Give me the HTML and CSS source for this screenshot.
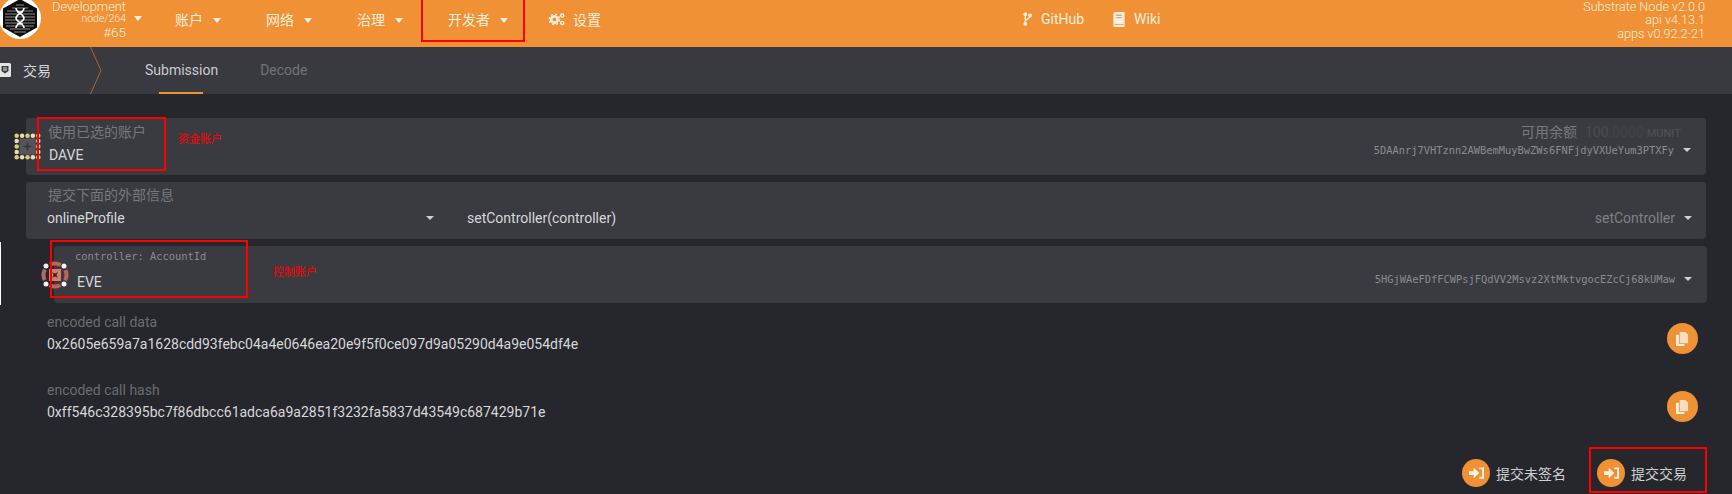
FILE: index.html
```html
<!DOCTYPE html>
<html lang="zh">
<head>
<meta charset="utf-8">
<title>交易</title>
<link rel="stylesheet" href="styles.css">
</head>
<body>
<header class="topbar">
  <svg class="logo" viewBox="0 0 42 42" width="42" height="42">
    <circle cx="21" cy="21" r="21" fill="#fff"/>
    <path d="M21 2 38 11.500V30.500L21 40 4 30.500V11.500Z" fill="#0c0c0c"/>
    <path d="M8 14H34M6 17H36M6 20H36M6 23H36M6 26H36M7 29H35M11 32H31M15 35H27M13 11H29M17 8H25" stroke="#8a8a8a" stroke-width="1"/>
    <path d="M17 11C17 16 25 17 25 21S17 26 17 31M25 11C25 16 17 17 17 21S25 26 25 31M18 15H24M18 27H24" fill="none" stroke="#fff" stroke-width="1.600"/>
  </svg>
  <div class="chain">
    <div class="chain-name">Development</div>
    <div class="chain-node">node/264</div>
    <div class="chain-block">#65</div>
  </div>
  <i class="caret caret-chain"></i>
  <nav class="nav">
    <a class="nav-item">账户<i class="caret"></i></a>
    <a class="nav-item">网络<i class="caret"></i></a>
    <a class="nav-item">治理<i class="caret"></i></a>
    <a class="nav-item nav-dev">开发者<i class="caret"></i></a>
    <a class="nav-item nav-set">
      <svg class="ico" viewBox="0 0 20 16" width="18" height="14"><g fill="none" stroke="#fdeedd"><circle cx="7" cy="8.500" r="3.700" stroke-width="3"/><circle cx="7" cy="8.500" r="6" stroke-width="1.500" stroke-dasharray="2.400 2.300"/><circle cx="16" cy="4" r="1.800" stroke-width="1.600"/><circle cx="16" cy="12.500" r="1.800" stroke-width="1.600"/></g></svg>设置
    </a>
  </nav>
  <div class="links">
    <a class="link">
      <svg class="ico" viewBox="0 0 10 16" width="9" height="14"><path d="M2.500 3.500V13M8 4.500C8 8 2.500 7.500 2.500 10.500" fill="none" stroke="#fdeedd" stroke-width="1.600"/><circle cx="2.500" cy="2.500" r="2.200" fill="#fdeedd"/><circle cx="2.500" cy="13.500" r="2.200" fill="#fdeedd"/><circle cx="8" cy="4" r="2.200" fill="#fdeedd"/></svg>GitHub
    </a>
    <a class="link">
      <svg class="ico" viewBox="0 0 12 16" width="12" height="15"><path d="M2 0H12V16H2A2 2 0 0 1 0 14V2A2 2 0 0 1 2 0Z" fill="#fdeedd"/><path d="M3 3.500H9M3 6H9" stroke="#e9a468" stroke-width="1.500"/><path d="M1 13.300H11" stroke="#e9a468"/></svg>Wiki
    </a>
  </div>
  <div class="versions">
    <div>Substrate Node v2.0.0</div>
    <div>api v4.13.1</div>
    <div>apps v0.92.2-21</div>
  </div>
</header>

<div class="tabs">
  <div class="tabs-title">
    <svg class="tabs-icon" viewBox="0 0 14 14" width="14" height="14"><path d="M1 1.500A1.500 1.500 0 0 1 2.500 0H11.500A1.500 1.500 0 0 1 13 1.500V12.500A1.500 1.500 0 0 1 11.500 14H2.500A1.500 1.500 0 0 1 1 12.500Z" fill="#e4e4e4"/><path d="M3.500 3H10.500V8L7 10.500 3.500 8Z" fill="#393a3f"/><path d="M5 5H9M5 7H9" stroke="#e4e4e4"/></svg>
    <span>交易</span>
  </div>
  <svg class="tabs-sep" viewBox="0 0 12 47" width="12" height="47"><path d="M0.500 0 11 23.500 0.500 47" fill="none" stroke="#a9672b"/></svg>
  <a class="tab tab-active">Submission</a>
  <a class="tab tab-next">Decode</a>
</div>

<main class="main">
  <section class="card">
    <div class="stack">
      <div class="label">使用已选的账户</div>
      <div class="value value-name">DAVE</div>
    </div>
    <div class="stack stack-right">
      <div class="balance"><span class="label">可用余额</span><span class="bal-num">100<span class="bal-frac">.0000</span></span><span class="bal-unit">MUNIT</span></div>
      <div class="addr-row"><span class="mono">5DAAnrj7VHTznn2AWBemMuyBwZWs6FNFjdyVXUeYum3PTXFy</span><i class="caret caret-sm"></i></div>
    </div>
    <svg class="identicon id-dave" viewBox="0.500 0.500 25 25" width="27" height="27">
      <rect x="5.500" y="5.500" width="15" height="15" fill="#55555a"/>
      <path d="M13 8 14 12 18 13 14 14 13 18 12 14 8 13 12 12Z" fill="#36363a"/>
      <g fill="#dccb7a">
        <circle cx="3" cy="3" r="2.100"/><circle cx="8" cy="3" r="2.100" fill="#e8e0ad"/><circle cx="13" cy="3" r="2.100"/><circle cx="18" cy="3" r="2.100" fill="#e8e0ad"/><circle cx="23" cy="3" r="2.100"/>
        <circle cx="3" cy="8" r="2.100" fill="#e8e0ad"/><circle cx="3" cy="13" r="2.100"/><circle cx="3" cy="18" r="2.100" fill="#e8e0ad"/>
        <circle cx="3" cy="23" r="2.100"/><circle cx="8" cy="23" r="2.100" fill="#e8e0ad"/><circle cx="13" cy="23" r="2.100"/><circle cx="18" cy="23" r="2.100" fill="#e8e0ad"/><circle cx="23" cy="23" r="2.100"/>
        <circle cx="23" cy="8" r="2.100" fill="#e8e0ad"/><circle cx="23" cy="13" r="2.100"/><circle cx="23" cy="18" r="2.100" fill="#e8e0ad"/>
      </g>
    </svg>
  </section>

  <section class="card card-call">
    <div class="label">提交下面的外部信息</div>
    <div class="call-row">
      <div class="call-section"><span class="value">onlineProfile</span><i class="caret caret-sm"></i></div>
      <div class="call-method value">setController(controller)</div>
      <div class="call-pick"><span class="value-dim">setController</span><i class="caret caret-sm"></i></div>
    </div>
  </section>

  <section class="card card-param">
    <div class="stack">
      <div class="mono param-label">controller: AccountId</div>
      <div class="value value-name">EVE</div>
    </div>
    <div class="addr-row"><span class="mono">5HGjWAeFDfFCWPsjFQdVV2Msvz2XtMktvgocEZcCj68kUMaw</span><i class="caret caret-sm"></i></div>
    <svg class="identicon id-eve" viewBox="0 0 28 28" width="28" height="28">
      <circle cx="14" cy="14" r="11.500" fill="none" stroke="#b8675a" stroke-width="4" stroke-dasharray="11 7.060" stroke-dashoffset="5.500"/>
      <rect x="8" y="8" width="12" height="12" fill="#d87b6c"/>
      <path d="M14 10 15 13 18 14 15 15 14 18 13 15 10 14 13 13Z" fill="#33282a" transform="rotate(45 14 14)"/>
      <g fill="#f4f4f4"><circle cx="5" cy="5" r="2.500"/><circle cx="23" cy="5" r="2.500"/><circle cx="5" cy="23" r="2.500"/><circle cx="23" cy="23" r="2.500"/></g>
    </svg>
  </section>

  <section class="encoded">
    <div class="stack">
      <div class="label label-en">encoded call data</div>
      <div class="hex">0x2605e659a7a1628cdd93febc04a4e0646ea20e9f5f0ce097d9a05290d4a9e054df4e</div>
    </div>
    <button class="round round-copy">
      <svg viewBox="0 0 14 15" width="13" height="14"><path d="M4 0H10L13 3V12H4Z" fill="#fbdcbc"/><path d="M0 3H3V13H9V15H0Z" fill="#fff2e5"/></svg>
    </button>
  </section>
  <section class="encoded">
    <div class="stack">
      <div class="label label-en">encoded call hash</div>
      <div class="hex">0xff546c328395bc7f86dbcc61adca6a9a2851f3232fa5837d43549c687429b71e</div>
    </div>
    <button class="round round-copy">
      <svg viewBox="0 0 14 15" width="13" height="14"><path d="M4 0H10L13 3V12H4Z" fill="#fbdcbc"/><path d="M0 3H3V13H9V15H0Z" fill="#fff2e5"/></svg>
    </button>
  </section>

  <div class="actions">
    <a class="action">
      <span class="round round-sm"><svg viewBox="0 0 16 12" width="15" height="12"><path d="M0 4H5V0.500L11 6 5 11.500V8H0Z" fill="#fff2e5"/><path d="M11 1H15V11H11" fill="none" stroke="#fff2e5" stroke-width="2"/></svg></span>提交未签名
    </a>
    <a class="action">
      <span class="round round-sm"><svg viewBox="0 0 16 12" width="15" height="12"><path d="M0 4H5V0.500L11 6 5 11.500V8H0Z" fill="#fff2e5"/><path d="M11 1H15V11H11" fill="none" stroke="#fff2e5" stroke-width="2"/></svg></span>提交交易
    </a>
  </div>
</main>

<div class="edge-line"></div>
<div class="mark mark-nav"></div>
<div class="mark mark-dave"></div>
<div class="mark mark-eve"></div>
<div class="mark mark-submit"></div>
<div class="note note-fund">资金账户</div>
<div class="note note-ctrl">控制账户</div>
</body>
</html>
```
FILE: styles.css
```css
* { box-sizing: border-box; }
html, body { margin: 0; height: 494px; overflow: hidden; }
body {
  position: relative;
  background: #26272c;
  color: #d6d7d9;
  font-family: Roboto, "Noto Sans CJK SC", sans-serif;
  font-size: 14px;
}
.topbar {
  display: flex;
  align-items: center;
  height: 47px;
  background: #f19135;
  color: #fdeedd;
  overflow: hidden;
}
.logo { flex: none; margin: -11px 0 0 -1px; }
.chain { width: 85px; text-align: right; margin-top: -6px; font-weight: 300; font-size: 13.500px; }
.chain-name { font-size: 12.800px; line-height: 12px; }
.chain-node { font-size: 10.500px; line-height: 11px; }
.chain-block { line-height: 16px; }
.caret {
  display: inline-block;
  width: 0;
  height: 0;
  border-left: 4.500px solid transparent;
  border-right: 4.500px solid transparent;
  border-top: 5px solid #fdeedd;
  margin-left: 10px;
  vertical-align: 2px;
}
.caret-chain { margin: -10px 0 0 8px; }
.caret-sm { border-top-color: #d0d1d3; margin-left: 9px; border-left-width: 4px; border-right-width: 4px; border-top-width: 4px; }
.nav { display: flex; align-items: center; height: 100%; margin-left: 33px; margin-top: -9px; }
.nav-item { font-size: 14px; width: 91px; white-space: nowrap; }
.nav-dev { width: 100px; }
.nav-set { display: flex; align-items: center; gap: 7px; }
.ico { flex: none; }
.links { display: flex; gap: 29px; margin-left: 384px; margin-top: -9px; font-size: 14px; }
.link { display: flex; align-items: center; gap: 9px; }
.versions { margin-left: auto; padding-right: 27px; text-align: right; font-size: 12.600px; line-height: 13.500px; font-weight: 300; margin-top: -7px; }
.tabs {
  display: flex;
  align-items: center;
  height: 47px;
  background: #393a3f;
}
.tabs-title { display: flex; align-items: center; gap: 11px; width: 92px; margin-left: -2px; color: #d6d7d9; padding-bottom: 2px; }
.tabs-icon { flex: none; }
.tabs-sep { flex: none; }
.tab { position: relative; color: #727377; margin-left: 43px; font-size: 14px; line-height: 47px; }
.tab-active { color: #c9cbd0; }
.tab-next { margin-left: 42px; }
.tab-active::after {
  content: "";
  position: absolute;
  left: 14px;
  bottom: 0;
  width: 44px;
  height: 2px;
  background: #f19135;
}
.main { padding: 24px 26px 0; }
.card {
  position: relative;
  display: flex;
  justify-content: space-between;
  height: 57px;
  background: #3a3b40;
  border-radius: 4px;
  margin-bottom: 7px;
  padding: 5px 14px 0 22px;
}
.stack { display: flex; flex-direction: column; }
.stack-right { align-items: flex-end; }
.label { color: #77787b; font-size: 14px; line-height: 18px; }
.label-en { color: #6b6c6f; }
.value { color: #d6d7d9; font-size: 14px; line-height: 20px; }
.value-name { margin: 4px 0 0 1px; }
.value-dim { color: #7f8083; font-size: 14px; }
.balance { display: flex; align-items: baseline; height: 19px; margin-right: 11px; }
.bal-num { color: #4a4b50; margin-left: 8px; font-size: 14px; }
.bal-frac { color: #424347; }
.bal-unit { color: #4d4e53; margin-left: 3px; font-size: 11px; font-weight: 500; }
.addr-row { display: flex; align-items: center; margin-top: -2px; height: 20px; padding-right: 1px; }
.mono { font-family: "DejaVu Sans Mono", monospace; font-size: 10.400px; color: #8a8b8f; white-space: nowrap; }
.identicon { position: absolute; }
.id-dave { left: -12px; top: 15px; }
.card-call { display: block; padding-top: 4px; }
.call-row { display: flex; align-items: center; height: 20px; margin-top: 4px; margin-left: -1px; }
.call-section { width: 420px; display: flex; justify-content: space-between; align-items: center; padding-right: 33px; }
.call-pick { margin-left: auto; display: flex; align-items: center; }
.card-param {
  margin-left: 28px;
  margin-right: -1px;
  padding: 1px 14px 0 21px;
  margin-bottom: 0;
}
.card-param .addr-row { margin-top: 22px; }
.param-label { line-height: 18px; }
.card-param .value-name { margin: 7px 0 0 2px; }
.id-eve { left: -13px; top: 15px; }
.encoded {
  display: flex;
  justify-content: space-between;
  align-items: flex-start;
  height: 41px;
  margin: 0 8px 27px 21px;
}
.card-param + .encoded { margin-top: 10px; }
.hex { color: #d6d7d9; font-size: 14px; line-height: 20px; margin-top: 3px; }
.round {
  flex: none;
  display: flex;
  align-items: center;
  justify-content: center;
  width: 31px;
  height: 31px;
  padding: 0;
  border: 0;
  border-radius: 50%;
  background: #f19135;
}
.round-copy { margin-top: 10px; }
.round-sm { width: 28px; height: 28px; }
.actions { display: flex; justify-content: flex-end; gap: 31px; margin: 37px 19px 0 0; }
.action { display: flex; align-items: center; gap: 6px; color: #cfd0d3; font-size: 14px; }
.edge-line { position: absolute; left: 0; top: 242px; width: 1px; height: 63px; background: #fff; }
.mark { position: absolute; border: 2px solid #f00; }
.mark-nav { left: 421px; top: -2px; width: 104px; height: 44px; }
.mark-dave { left: 37px; top: 117px; width: 129px; height: 54px; }
.mark-eve { left: 50px; top: 240px; width: 198px; height: 58px; }
.mark-submit { left: 1589px; top: 447px; width: 118px; height: 46px; }
.note { position: absolute; color: #f00; font-size: 11px; line-height: 14px; }
.note-fund { left: 178px; top: 133px; }
.note-ctrl { left: 273px; top: 266px; }
```
